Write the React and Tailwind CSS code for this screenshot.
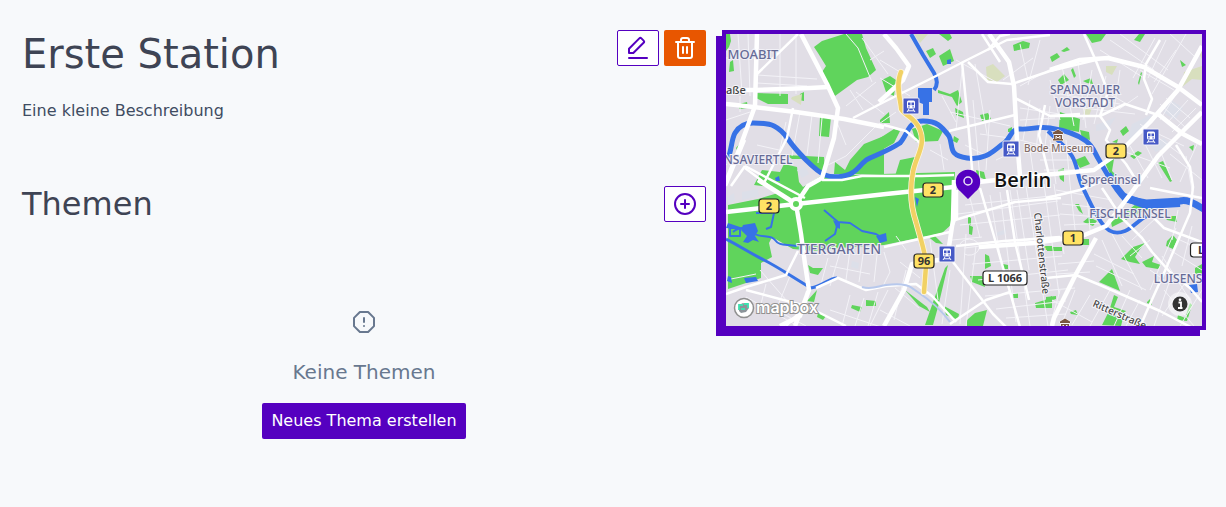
import React from "react";

const PURPLE = "#5500c0";

const strokeIcon = {
  width: 24,
  height: 24,
  viewBox: "0 0 24 24",
  fill: "none",
  stroke: "currentColor",
  strokeWidth: 2,
  strokeLinecap: "round",
  strokeLinejoin: "round",
  "aria-hidden": true,
};

function EditIcon() {
  return (
    <svg {...strokeIcon}>
      <path d="M3 17v-4.300L13.300 2.400a1.500 1.500 0 0 1 2.100 0l2.200 2.200a1.500 1.500 0 0 1 0 2.100L7.300 17z" />
      <path d="M3 22h18" />
    </svg>
  );
}

function TrashIcon() {
  return (
    <svg {...strokeIcon}>
      <path d="M3 6h18M8 6V4a2 2 0 0 1 2-2h4a2 2 0 0 1 2 2v2M5 6v14a2 2 0 0 0 2 2h10a2 2 0 0 0 2-2V6M10 11v6M14 11v6" />
    </svg>
  );
}

function PlusCircleIcon() {
  return (
    <svg {...strokeIcon}>
      <circle cx="12" cy="12" r="10" />
      <path d="M12 8v8M8 12h8" />
    </svg>
  );
}

function OctagonAlertIcon() {
  return (
    <svg {...strokeIcon}>
      <path d="M7.9 2h8.2L22 7.9v8.2L16.1 22H7.9L2 16.1V7.9z" />
      <path d="M12 8v4M12 16v.01" />
    </svg>
  );
}

const greens = [
  "M814 47l8-6 22-7h18l4 14 10 22-8 7-11 3-22 16-9-12-4-12 4-6-8-13z",
  "M762 170l18 2 4-8 13 3 2 15 4 5 18-11 60-2 74-2-3 52-10 9-58 12-45 3-24 3-22-2-21-12-3 6 3 14-11 6v15l-33 11v-84l30-6 20-6-7-6-17-2z",
  "M726 34h4l1 7-2 6-3 4zM730 62l3-2 1 11-5 1zM756 93l32 1v10l-20 0-12-6zM800 94l4-2v9l-5-1zM739 104l8-2 1 6-9 1zM736 148l5-6 2 3-5 7z",
  "M820 117l11 0-2 20-10-1zM786 155l38 2 1 15-6 0-14-13-13 0zM835 162l10 8 5-10 14-16 20-8v38h-50z",
  "M882 80l8-4 6 4-2 16-8-4zM939 56l11-7 4 12-11 5zM926 51l7-3 3 6-6 4zM880 120l9-8 1 11h-10zM880 138l14-9 6 2-6 12-14 8zM939 34h11l2 4-4 3z",
  "M912 129l15-5 16 7-5 10-22 1zM900 160l15-3v19l-20 0zM938 90l12 4 8-4 4 12-5 4-5-9-14-4zM955 108l8 4 1 6-8-3zM980 115l8-2 3 6-9 2zM954 136l5 3-2 4-4-2zM1008 129l4-2v5h-4zM976 170l8 2 2 8-9-4z",
  "M1013 45l10-4 7 2-1 5-15 3zM1086 34h20l-5 7-9 2zM1134 40l5-6h6l-5 8zM1050 57l7-4 3 4-8 5zM1061 51l6-4 3 3-6 2zM1058 80l6-6 5 6-8 5zM1073 68l3 8-2 2-3-8zM1083 81l8-3 2 6-6-1zM1138 83l3-11 1 1-3 12zM1180 60l6 5-4 2zM1196 78l6-3v4z",
  "M1060 112l20 7-1 13-20-4zM1080 130l9 2 1 8-8-2zM1120 131l6-5 3 5-6 5zM1130 156l8-5 4 2-8 6zM1105 163l9-4-2 12 5 5-6 0zM1075 160l10-4 5 8-10 4zM1058 170l6-2v14l-4-3zM1158 163l5-2 9 20-2 1zM1189 147l5-2-1 6zM1112 142l6-3-1 4z",
  "M968 216l3 2v7l-3-1zM969 225l4 2-1 8-3-1zM926 235l8 0 9 9-7-1zM945 268l3-3-10 42-5 18h-8zM985 254l4 2 2 10-6 3zM970 276l12 0 3 11-13-5zM967 320l8-7 12-3-4 16h-16zM944 306l15 8-1 6-12-5zM905 290l22 17 3 5-11-6zM1044 246h8v4h-9zM1035 303l10-3 7-4v12h-16zM1003 264l5 1v4h-6zM1013 294l5-1v5h-5z",
  "M1121 259l12-12 12-4-5 6-5 8 5 7-10-2zM1099 282l13-13 8 22zM1114 295l4 2-4 10 12 4-2 2-14-5zM1102 325l6-12 15 5-2 8zM1083 222l6-5 8 4-4 5zM1075 204l4 0 4 10-4-3zM1142 262l12-6-2 6 9 3-3 4-12-2zM1167 241l6-6 4 5-4 9-7-3zM1164 216l12 0 1 6-10-2zM1195 268l7-4v12l-7-2zM1147 302l3-3 2 6-5-2zM1178 315l7 3 5-15 2 2-5 16-10-1zM1047 247h15v4h-15zM1078 239h11v6h-9zM1046 297l10-1v3l-10 3zM1070 312l6-2 2 5-7-1zM1111 222l15-10 10-8 38-5v5l-32 7-18 10-12 6z",
  "M808 265l5 3 10 0-5 7-8-2zM807 301l10-11-3 12-7-1zM852 305l10 2-2 5-9-4zM866 300l10 1v5h-10zM818 313l8 3-3 4-6-3z",
];

const sand = [
  "M792 97l10-3-1 11-10-6zM914 34h14l-8 9zM986 67l7-3 12 12-8 6-10-2zM1106 66l11 0-5 9-6-3zM1084 108l8 0-3 8-6-2zM1184 72l18-6v14l-10-1-10 8zM1198 52l4-5v12z",
];

const blocks = [
  "M742 192l16-3 1 7-17 4zM726 198l8-5 1 8-9 4zM797 170l8-4 4 8-7 4zM1096 125l20-8-8 12-12 2zM1132 124l20-10-6 15-20 16zM1171 100l12 8-8 12-12-8zM852 261l7 2-1 6-7-2zM996 233l10-4 0 5-10 2zM1150 146l14-8 6 6-14 8z",
];

const minorRoads = [
  "M738 34l4 60M748 34l2 62M780 34l0 62M796 34l0 60M726 58h35M757 75l60 4M757 83l50 3M740 96v16M726 120l24-8M757 145l22 5M786 122l-8 36M800 112l-8 44M812 115l-5 40M822 118l-4 45M836 120l10 25M826 166l20-10 30-30 20-14M846 34l12 14 14 34M862 38l26 36M870 60l14-9M856 92l28 22M846 106l30-24M850 90l13 20M880 60l20 12M880 78l30 18",
  "M726 280l30-6M766 284l-6 24M790 276l-14 34 30 16M746 297l50 28M760 270l40 46M828 258l-8 30M840 252l-10 34M850 250l-4 30M864 248l-5 34M878 246l-4 36M830 266l40 8M850 295l-8 31M864 298l-9 28M878 292l-10 34M830 310l60 20",
  "M884 252l6 20-8 16M906 250l-10-14M900 262l20 16M888 290l-18 36M895 288l24 20M906 270l-12 50M880 310l30 16M930 240l8 60M950 270l-8 54M966 234l-6 90M976 246l-10 80M952 240l30-3M960 244a10 8 0 1 1 4 10",
  "M956 60l40 22M962 70l-6 60M975 64l12 70M950 112l60 14M965 145l20 10M980 134l30 4M996 160l22-10M990 110l-4 60M973 100l7 80M942 96l14 26M930 150l18 10M940 144l4 26M1003 80l30-22M1020 44l8 36M1040 40l-12 45",
  "M965 205l95-10M958 214l100-13M960 225l100-10M964 248l100-12M972 264l90-8M978 280l90-10M985 296l90-8M996 309l70-8M1006 318l60-4M970 198l10 40M990 195l10 60M1000 192l16 130M1010 190l20 136M1026 186l22 140M1044 184l15 110M1054 184l10 70M1017 190l12 80",
  "M1020 108l40 6M1020 120l35-2M1030 100l-7 40M1040 108l-4 45M1050 106l-5 40M1020 140l40 10M1030 150l5 34M1040 160h36M1044 170h32M1050 140l6 44M1066 140l4 44",
  "M1020 86l36-20M1050 80l10 40M1062 66l12 60M1078 62l8 66M1092 70l-9 50M1106 76l-12 48M1060 94l60 10M1065 106l70 8M1110 94l20 12M1120 70l-6 40M1138 96l-20 14M1100 50l44 28M1110 40l44 30M1120 34l48 36M1155 38l-22 40M1166 40l-18 38M1176 50l-22 32M1186 34l-34 60M1194 56l-24-22M1140 70l34 20",
  "M1160 104l26 24M1166 98l24 20M1176 94l-16 26M1188 100l-20 22M1196 108l-24 24M1150 130l34 16M1120 150l50 18M1140 124l40 30M1130 146l18 32M1144 142l18 36M1160 150l12 30M1170 154l32 26M1186 156l6 34M1198 142l-18 40",
  "M1056 190l56 10M1062 204l40 4M1060 214l40 3M1064 225l40-2M1058 264l36-3M1056 274l34-2M1052 300l40 22M1060 290l-10 36M1075 290l-14 36M1090 295l-18 30M1070 184l6 54M1086 184l4 46M1102 240l20 46M1112 234l30 56M1122 236l20 22M1094 254l40 20M1096 266l50 24M1110 290l-20 36",
  "M1132 240l24-22M1150 240l-20 16M1150 290l26-62M1162 256l28 44M1170 250l32 20M1180 240l22 10M1192 226l-10 40M1164 290l30 36M1170 280l-16 46M1190 276l-28 40M1150 270l20 14M1130 290l-16 36M1140 300l-14 26M1178 210l-6 30M1202 290l-22 36",
];

const mediumRoads = [
  "M757 74L798 34",
  "M793 108l-6 30-24 47",
  "M726 186l19-46M745 168l24 18",
  "M745 166l-14 20M745 166l60 32",
  "M853 118L884 102 936 76 967 60 1007 40 1050 35",
  "M962 62l6 60 5 58",
  "M968 62l20 20 24 2 38-13 50-12",
  "M1000 62L982 34M988 50l12-14 10-2",
  "M884 125l22 6 14 12M949 131l66-16M1015 98l35 18 30-2M1045 105l-6 30 10 40",
  "M1084 34l12 27 12 31-8 24 10 14-4 10 20 24 14 22",
  "M1050 116h50l25-12 30 10",
  "M1160 40l-14 24-2 15 8 20-6 16",
  "M1176 145l14 22 3 20-3 26-26 60-18 40-6 14",
  "M726 294l20-7 40-12 12-24",
  "M746 290l60 16 40 20M806 306l-20 20",
  "M884 247l66-15 5-12 60-18 46-4",
  "M956 246l48-5 56-4",
  "M980 188l16 55 24 84",
  "M1007 190l8 52 14 58",
  "M953 262l40 52 14 14",
  "M950 324l36-24 24-8",
  "M1102 188l20 30 20 20 10 14 18 20 20 16 12 14",
  "M1152 216l12 12 38 14M1150 188l20 4 32 6",
  "M1046 278l30-3 24 10 60 26 42 22",
  "M1046 198l34-8 20-8",
  "M816 288l22-10 28 12 20-4 30-2 16 12 24 26",
  "M822 180l20 0 20-4 60 0 32-1",
];

const majorRoads = [
  "M757 34l-2 72-16 44-13 32",
  "M801 34l26 50 11 24-4 30-12 40-14 8-12 18",
  "M726 104l10 1 60 7 48 7 40 8",
  "M884 34l12 14 13 18-6 14-24 22",
  "M989 34l20 28 5 24 3 54 3 36",
  "M1202 46l-24 44-28 32-30 30-26 18-80 8-44 5-14 2",
  "M1050 70l30-10 28-2 36 9 34 20 24 18",
  "M1158 114l25 20 19 10M1202 112l-20 20-24 24-26 36-26 34-24 10-48 7-55 4",
  "M1096 238l-20 36-22 44-2 8",
  "M726 212l70-8 90-10 68-7",
  "M796 204l-22-14-16-10",
  "M796 204l5 30 4 30 4 26-14 36M808 292l-8 24-20 10",
  "M954 180l-1 40-6 40M956 190l0 30",
  "M726 90h28l56-2 18-1",
  "M884 326l20-36 8-26 40-6",
];

function MapLabel({ x, y, lines, size = 13 }) {
  return (
    <g fontSize={size} fontWeight="500" textAnchor="middle" fill="#666b96" stroke="#f1f0f6" strokeWidth="2" paintOrder="stroke">
      {lines.map((line, i) => (
        <text key={line} x={x} y={y + i * 13}>{line}</text>
      ))}
    </g>
  );
}

function RoadShield({ x, y, label, width = 20, white = false }) {
  return (
    <g>
      <rect x={x - width / 2} y={y - 7} width={width} height="14" rx="3" fill={white ? "#ffffff" : "#ffe264"} stroke="#222222" strokeWidth="1.2" />
      <text x={x} y={y + 4} fontSize="11" fontWeight="700" textAnchor="middle" fill="#333333">{label}</text>
    </g>
  );
}

function TrainStop({ x, y }) {
  return (
    <g transform={`translate(${x} ${y})`}>
      <rect x="-8" y="-8" width="16" height="16" rx="1" fill="#4659c6" stroke="#f1f0f6" strokeWidth="1" />
      <path d="M-2.500-5.500h5a1.500 1.500 0 0 1 1.500 1.500v5A1.500 1.500 0 0 1 2.500 2.500h-5A1.500 1.500 0 0 1-4 1v-5a1.500 1.500 0 0 1 1.500-1.500z" fill="#ffffff" />
      <path d="M-3-3.500h2.500v2.800H-3zM.5-3.500H3v2.800H.5zM-2.800.2h1.400v1.200h-1.400zM1.400.2h1.400v1.200H1.400z" fill="#4659c6" />
      <path d="M-2 3l-2 3M2 3l2 3M-3 4.800h6" stroke="#ffffff" strokeWidth="1" />
    </g>
  );
}

function Museum({ x, y }) {
  return (
    <g transform={`translate(${x} ${y})`} stroke="#ffffff" strokeWidth="1" paintOrder="stroke">
      <path d="M0-5.500l5 3V-1H-5v-1.500zM-4 0h8v4h1v1.500H-5V4h1z" fill="#7a5640" />
      <path d="M-2 4V1.200L0 3l2-1.800V4" fill="none" />
    </g>
  );
}

function CityMap() {
  return (
    <svg
      className="block h-auto w-full"
      viewBox="726 34 476 292"
      preserveAspectRatio="xMidYMid slice"
      role="img"
      aria-label="Berlin"
      fontFamily='"Noto Sans", "Open Sans", sans-serif'
    >
      <rect x="726" y="34" width="476" height="292" fill="#e1dee6" />
      {greens.map((d) => <path key={d} d={d} fill="#60d45c" />)}
      {sand.map((d) => <path key={d} d={d} fill="#d8dfbe" />)}
      {blocks.map((d) => <path key={d} d={d} fill="#dcdfe9" />)}

      <g fill="none" stroke="#f3f2f7" strokeWidth="1">
        {minorRoads.map((d) => <path key={d} d={d} />)}
      </g>

      <g fill="none" stroke="#3772e6" strokeLinejoin="round">
        <path d="M727 161C732 151 731 140 735 133S746 123 753 123 768 123 774 126 784 133 788 139 800 154 806 160 818 172 825 175 845 177 852 173 862 162 868 159 888 151 900 143C908 134 908 121 923 121S942 127 949 136C954 146 947 155 967 158S996 148 1003 144 1011 128 1020 129 1037 126 1050 128 1078 135 1086 141 1094 152 1099 160 1104 170 1110 178" strokeWidth="5" />
        <path d="M1108 174c7 12 11 18 18 25l20 4 34-2c9-2 16 4 24 8" strokeWidth="7" />
        <path d="M1124 197l22 8 34-2" strokeWidth="8" />
        <path d="M1048 131c10 10 18 15 24 25s5 20 11 32 10 22 18 34 16 12 24 9 14-12 24-16" strokeWidth="4" />
        <path d="M911 34l12 21 11 18c4 7 4 12 0 17" strokeWidth="4" />
        <path d="M726 239c12 6 24 14 38 21s30 18 47 28" strokeWidth="3" />
        <path d="M811 288c12-2 18-10 26-10" strokeWidth="3" />
        <path d="M733 232c10-8 16-2 22 2s16 0 20 6 10 4 22 6M730 228h10v8h-10zM756 213h16M774 213l-3 14-5 2M824 210l14 12 12 1 12 8 14 3 10 6M838 222l-3 12-10 7" strokeWidth="2" />
      </g>
      <path d="M743 225l12-2 3 8-3 5 4 6-6-2-5 3-5-1 4-6-6-6zM728 223l12 4-4 2-10-1zM833 220l7 3 0 6-4-2zM876 236l10-3 1 8-7 2zM728 276l3 1 1 6-5-2zM744 278l12-1 2 4-12 2zM775 178l4-2 1 5-4 0zM776 202l-6 0 2-3zM947 60l4-1v5h-4zM918 88h14v14h-3v13h-6v-11l-5-2zM915 197l4 2-2 8zM1189 285l8-1 1 8-7 1z" fill="#3772e6" />

      <g fill="none" stroke="#ffffff" strokeLinejoin="round">
        <g strokeWidth="2.500">{mediumRoads.map((d) => <path key={d} d={d} />)}</g>
        <g strokeWidth="4.500">{majorRoads.map((d) => <path key={d} d={d} />)}</g>
        <circle cx="796" cy="204" r="5" strokeWidth="4" fill="#60d45c" />
      </g>
      <path d="M862 287c10 3 16-1 24-2s20-2 26 3 22 12 38 34" fill="none" stroke="#b7c8ec" strokeWidth="2" />
      <g fill="none" strokeLinejoin="round" strokeLinecap="round">
        <path d="M901 72c-6 14 0 30 0 36s14 8 19 22c6 16-4 26-7 42s-3 32 3 50c6 22 10 32 10 44l-2 26" stroke="#fff7df" strokeWidth="6" />
        <path d="M901 72c-6 14 0 30 0 36s14 8 19 22c6 16-4 26-7 42s-3 32 3 50c6 22 10 32 10 44l-2 26" stroke="#f1d164" strokeWidth="4.500" />
      </g>

      <MapLabel x={753} y={59} lines={["MOABIT"]} />
      <MapLabel x={758} y={164} lines={["NSAVIERTEL"]} size={12} />
      <MapLabel x={839} y={254} lines={["TIERGARTEN"]} size={14} />
      <MapLabel x={1085} y={94} lines={["SPANDAUER", "VORSTADT"]} size={12} />
      <MapLabel x={1111} y={184} lines={["Spreeinsel"]} size={12} />
      <MapLabel x={1130} y={218} lines={["FISCHERINSEL"]} size={12} />
      <MapLabel x={1178} y={283} lines={["LUISENS"]} size={12} />

      <g fill="#444444" stroke="#f7f6fa" strokeWidth="2" paintOrder="stroke" fontSize="10" fontWeight="500">
        <text x="726" y="94" fontSize="11">aße</text>
        <text transform="translate(1034 213) rotate(84)">Charlottenstraße</text>
        <text transform="translate(1092 306) rotate(24)">Ritterstraße</text>
        <text x="1024" y="152" fill="#826c66">Bode Museum</text>
      </g>

      <RoadShield x={769} y={206} label="2" />
      <RoadShield x={933} y={190} label="2" />
      <RoadShield x={1116} y={151} label="2" />
      <RoadShield x={1073} y={238} label="1" />
      <RoadShield x={924} y={261} label="96" />
      <RoadShield x={1005} y={278} label="L 1066" width={44} white />
      <RoadShield x={1201} y={250} label="L" width={21} white />

      <TrainStop x={911} y={106} />
      <TrainStop x={1011} y={149} />
      <TrainStop x={1151} y={137} />
      <TrainStop x={947} y={254} />
      <Museum x={1058} y={135} />
      <Museum x={1065} y={324} />

      <text x="994" y="187" fontSize="20" fontWeight="600" fontFamily='"Open Sans", sans-serif' fill="#111111" stroke="#ffffff" strokeWidth="2" paintOrder="stroke">Berlin</text>

      <path d="M968 199l-7.500-7.500a12.200 12.200 0 1 1 15 0z" fill={PURPLE} />
      <circle cx="968" cy="181" r="4" fill="none" stroke="#ece4f6" strokeWidth="1.500" />

      <circle cx="744" cy="308" r="9.500" fill="#ffffff" stroke="#8f8f8f" strokeWidth="1.500" />
      <path d="M739 311v-6l4-2 5 2 1 3-3 4-5 1z" fill="#8c949a" />
      <path d="M739 310v-5h4M744 304h4v4M741 309h4" fill="none" stroke="#3fe0b0" strokeWidth="1.800" />
      <text x="756" y="313" fontFamily='"Inter", sans-serif' fontSize="16" fontWeight="600" fill="#ffffff" stroke="#929292" strokeWidth="2" paintOrder="stroke">mapbox</text>

      <circle cx="1180" cy="304" r="12" fill="#ffffff" fillOpacity="0.5" />
      <circle cx="1180" cy="304" r="7.500" fill="#333333" />
      <path d="M1178.500 302.500h2.500v5M1178 308h4.500" fill="none" stroke="#ffffff" strokeWidth="1.800" />
      <circle cx="1180" cy="299.800" r="1.300" fill="#ffffff" />
    </svg>
  );
}

const outlineButton =
  "flex h-9 w-[42px] items-center justify-center rounded-xs border border-[#5500c0] bg-white text-[#5500c0]";

export default function App() {
  return (
    <main className="grid min-h-screen grid-cols-[171fr_121fr] items-start gap-4 bg-[#f7f9fb] pt-[30px] pr-5 pl-[22px] font-['DejaVu_Sans',sans-serif] text-[#3e4454]">
      <div className="min-w-0">
        <header className="flex items-start justify-between gap-4">
          <h1 className="text-[40px] leading-12">Erste Station</h1>
          <div className="flex gap-[5px]">
            <button type="button" aria-label="Station bearbeiten" className={outlineButton}>
              <EditIcon />
            </button>
            <button
              type="button"
              aria-label="Station löschen"
              className="flex h-9 w-[42px] items-center justify-center rounded-xs bg-[#e85600] text-white"
            >
              <TrashIcon />
            </button>
          </div>
        </header>
        <p className="mt-[21px] text-base leading-6 text-[#3f4c62]">Eine kleine Beschreibung</p>

        <section className="mt-[61px]">
          <div className="flex items-center justify-between gap-4">
            <h2 className="text-[32px] leading-10">Themen</h2>
            <button type="button" aria-label="Thema hinzufügen" className={outlineButton}>
              <PlusCircleIcon />
            </button>
          </div>
          <div className="mt-[86px] flex flex-col items-center text-[#68788f]">
            <OctagonAlertIcon />
            <p className="mt-6 text-xl leading-7">Keine Themen</p>
            <button type="button" className="mt-[17px] h-9 rounded-xs bg-[#5500c0] px-[9px] text-base text-white">
              Neues Thema erstellen
            </button>
          </div>
        </section>
      </div>

      <div className="overflow-hidden border-4 border-[#5500c0] shadow-[-6px_6px_0_#5500c0]">
        <CityMap />
      </div>
    </main>
  );
}
